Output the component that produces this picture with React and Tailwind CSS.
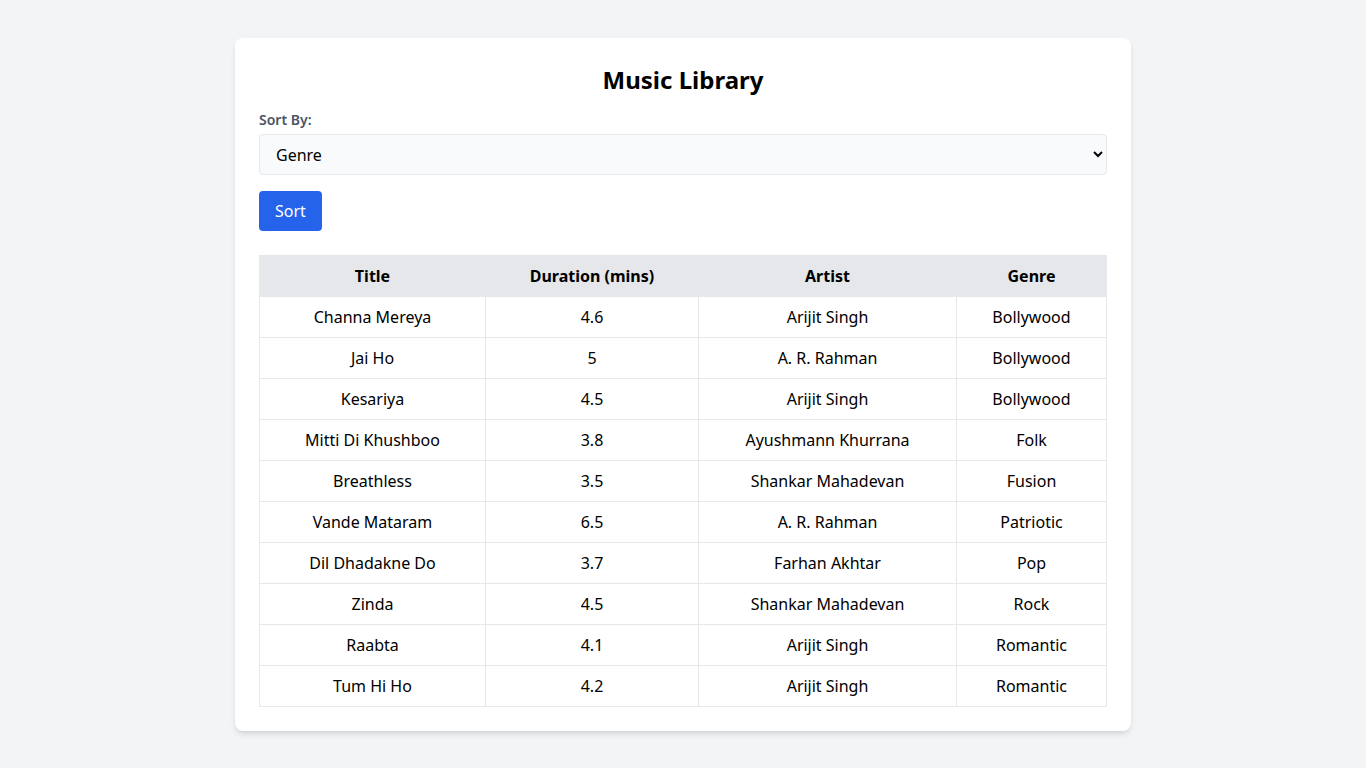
import React, { useState } from 'react';

const songs = [
  { title: 'Channa Mereya', duration: '4.6', artist: 'Arijit Singh', genre: 'Bollywood' },
  { title: 'Jai Ho', duration: '5', artist: 'A. R. Rahman', genre: 'Bollywood' },
  { title: 'Kesariya', duration: '4.5', artist: 'Arijit Singh', genre: 'Bollywood' },
  { title: 'Mitti Di Khushboo', duration: '3.8', artist: 'Ayushmann Khurrana', genre: 'Folk' },
  { title: 'Breathless', duration: '3.5', artist: 'Shankar Mahadevan', genre: 'Fusion' },
  { title: 'Vande Mataram', duration: '6.5', artist: 'A. R. Rahman', genre: 'Patriotic' },
  { title: 'Dil Dhadakne Do', duration: '3.7', artist: 'Farhan Akhtar', genre: 'Pop' },
  { title: 'Zinda', duration: '4.5', artist: 'Shankar Mahadevan', genre: 'Rock' },
  { title: 'Raabta', duration: '4.1', artist: 'Arijit Singh', genre: 'Romantic' },
  { title: 'Tum Hi Ho', duration: '4.2', artist: 'Arijit Singh', genre: 'Romantic' },
];

const App = () => {
  const [sortBy, setSortBy] = useState('genre');

  return (
    <div className="min-h-screen bg-[#f3f4f6] pt-[38px] font-['Noto_Sans',sans-serif] text-black">
      <div className="mx-auto max-w-4xl rounded-lg bg-white p-6 shadow-md">
        <h1 className="mb-[14px] pt-[2px] text-center text-2xl font-bold">Music Library</h1>

        <label className="mb-1 block text-sm font-semibold text-gray-600">Sort By:</label>
        <select
          value={sortBy}
          onChange={(e) => setSortBy(e.target.value)}
          className="h-[41px] w-full rounded border border-[#e5e7eb] bg-[#f9fafb] px-3 text-base"
        >
          <option value="title">Title</option>
          <option value="duration">Duration</option>
          <option value="artist">Artist</option>
          <option value="genre">Genre</option>
        </select>

        <button className="mt-4 rounded bg-[#2563eb] px-4 py-2 text-base text-white">Sort</button>

        {/* Table */}
        <table className="mt-6 w-full border-collapse text-center">
          <thead>
            <tr className="h-[41px] bg-[#e5e7eb]">
              <th className="w-[226px] border border-[#e5e7eb] px-4 font-bold">Title</th>
              <th className="w-[213px] border border-[#e5e7eb] px-4 font-bold">Duration (mins)</th>
              <th className="w-[258px] border border-[#e5e7eb] px-4 font-bold">Artist</th>
              <th className="border border-[#e5e7eb] px-4 font-bold">Genre</th>
            </tr>
          </thead>
          <tbody>
            {songs.map((s) => (
              <tr key={s.title} className="h-[41px]">
                <td className="border border-[#e5e7eb] px-4">{s.title}</td>
                <td className="border border-[#e5e7eb] px-4">{s.duration}</td>
                <td className="border border-[#e5e7eb] px-4">{s.artist}</td>
                <td className="border border-[#e5e7eb] px-4">{s.genre}</td>
              </tr>
            ))}
          </tbody>
        </table>
      </div>
    </div>
  );
};

export default App;
